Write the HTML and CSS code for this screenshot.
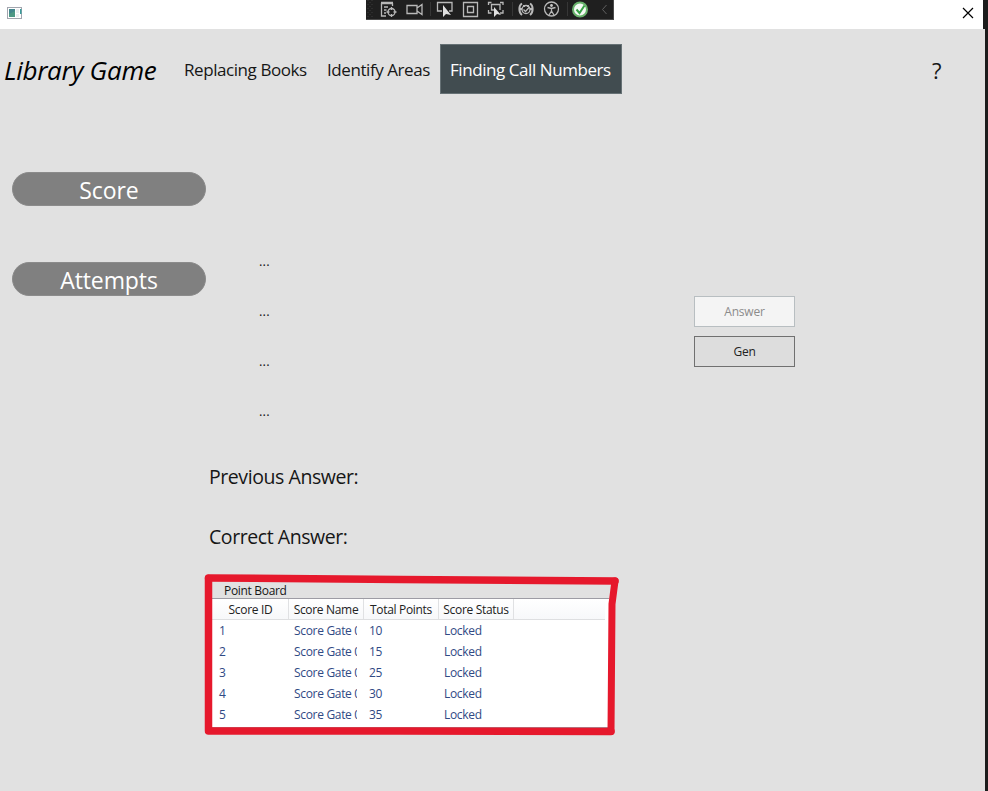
FILE: index.html
```html
<!DOCTYPE html>
<html lang="en">
<head>
<meta charset="utf-8">
<title>Library Game</title>
<link rel="stylesheet" href="styles.css">
</head>
<body>
<div class="titlebar">
  <svg class="app-icon" width="16" height="13" viewBox="0 0 16 13"><rect x=".5" y=".5" width="14" height="11" fill="#fff" stroke="#a2a5ae"/><rect x="2" y="2" width="6" height="8" fill="#43868c"/><path d="M2 7l6-3v6H2z" fill="#53a080" opacity=".7"/><path d="M9 2h3v4H9zM9 7h3v3H9z" fill="#eceef0"/><path d="M13 2h1.500v5H13z" fill="#3b9c9a"/></svg>
  <svg class="close" width="12" height="12" viewBox="0 0 12 12"><path d="M1 1l10 10M11 1L1 11" stroke="#000" stroke-width="1.200" fill="none"/></svg>
</div>
<svg class="debugbar" width="248" height="20" viewBox="0 0 248 20" fill="none">
  <path d="M0 0h248v20H0z" fill="#1f1f1f"/><path d="M0 19.500h248M247.500 0v19" stroke="#4a4a4a"/>
  <path d="M2 0v18M4 2v16M6 0v18" stroke="#3c3c3c" stroke-dasharray="1 3"/>
  <path d="M64.500 2v14M146.500 2v14M201.500 2v14" stroke="#363636"/>
  <g stroke="#b9b9b9" stroke-width="1.300">
    <path d="M15 3h12" stroke-width="2.500"/><path d="M15.500 3v13H20M18 7h4M18 10h2.500M18 13h2M26.500 3v3"/><circle cx="25.500" cy="12" r="3.500"/><path d="M25.500 7v3M25.500 14v3M20.500 12h3M27.500 12h3"/>
    <path d="M41 5.500h10v8H41zM51 8l5-3.500v10L51 11"/>
    <path d="M76 11h-4.500V2.500H86V11h-3"/>
    <path d="M97.500 2.500h14v14h-14zM101.500 6.500h6v6h-6z"/>
    <path d="M122.500 5V2.500h3M134 2.500h3V5M122.500 10v3h3M137 10v3h-3M129 10h-3.500V4.500H134V10"/>
    <path d="M156 3.500c-3.500 2-3.500 9 0 11.500M164 3.500c3.500 2 3.500 9 0 11.500M158 5v2M162 5v2M153 9h3M164 9h3" stroke-width="2"/><circle cx="160" cy="9.500" r="4"/><path d="M157.500 9.500l2 2 4-4.500"/>
    <circle cx="185.500" cy="9" r="7"/><path d="M181.500 7.500l4 1 4-1M185.500 8v3l-2.500 4M185.500 11l2.500 4"/>
  </g>
  <path d="M77 5v12l3-3 5 1zM128 7v10l3-3 4 1z" fill="#e0e0e0"/><circle cx="185.500" cy="5.500" r="1.400" fill="#c9c9c9"/>
  <circle cx="214" cy="9.500" r="7" fill="#f4faf4" stroke="#68b16b" stroke-width="2"/><path d="M210.500 9.500l3 3.500 5-7.500" stroke="#36a145" stroke-width="2"/>
  <path d="M240.500 5l-4 4.500 4 4.500" stroke="#606060"/>
</svg>
<div class="window">
  <header>
    <h1><span>Library Game</span></h1>
    <nav>
      <a class="books">Replacing Books</a>
      <a class="areas">Identify Areas</a>
      <a class="active">Finding Call Numbers</a>
    </nav>
    <span class="help">?</span>
  </header>
  <main>
    <aside>
      <div class="pill"><span class="score">Score</span></div>
      <div class="pill"><span>Attempts</span></div>
    </aside>
    <section class="quiz">
      <div class="choices"><p>...</p><p>...</p><p>...</p><p>...</p></div>
      <p class="result previous">Previous Answer:</p>
      <p class="result correct">Correct Answer:</p>
      <div class="board">
        <div class="board-title">Point Board</div>
        <div class="list">
          <div class="row head"><span>Score ID</span><span>Score Name</span><span>Total Points</span><span>Score Status</span></div>
          <div class="row"><span>1</span><span>Score Gate 0</span><span>10</span><span>Locked</span></div>
          <div class="row"><span>2</span><span>Score Gate 0</span><span>15</span><span>Locked</span></div>
          <div class="row"><span>3</span><span>Score Gate 0</span><span>25</span><span>Locked</span></div>
          <div class="row"><span>4</span><span>Score Gate 0</span><span>30</span><span>Locked</span></div>
          <div class="row"><span>5</span><span>Score Gate 0</span><span>35</span><span>Locked</span></div>
        </div>
        <svg class="marker" width="416" height="164" viewBox="204 573 416 164" fill="none" stroke="#e6182c" stroke-linecap="round" stroke-linejoin="round"><path d="M208.500 578L400 579.500L615 581" stroke-width="7.500"/><path d="M208.500 578.500V731H400L611 731.500" stroke-width="7.500"/><path d="M615 581L612 604L611 731.500" stroke-width="7"/></svg>
      </div>
    </section>
    <div class="actions"><button disabled>Answer</button><button>Gen</button></div>
  </main>
</div>
</body>
</html>
```

FILE: styles.css
```css
* { box-sizing: border-box; }
body { margin: 0; width: 988px; height: 791px; overflow: hidden; background: #1c1c1c; font-family: "Open Sans", "Noto Sans", sans-serif; color: #161616; }
h1, p { margin: 0; font-weight: 400; }
.titlebar { width: 983px; height: 29px; background: #fff; display: flex; justify-content: space-between; padding: 7px 9px 0 7px; }
.debugbar { position: absolute; left: 366px; top: 0; }
.window { width: 985px; height: 762px; background: #e1e1e1; }
header { display: flex; padding-top: 15px; height: 65px; line-height: 52px; white-space: nowrap; }
h1 { width: 174px; padding-left: 4px; font-size: 26px; font-style: italic; letter-spacing: -0.3px; color: #000; line-height: 52px; }
nav { display: flex; width: 758px; font-size: 17px; letter-spacing: -0.43px; }
nav a { height: 50px; padding-left: 10px; line-height: 52px; }
.books { width: 143px; }
.areas { width: 123px; }
nav .active { width: 182px; background: #414c50; border: 1px solid #667175; color: #fff; padding-left: 9px; line-height: 50px; }
.help { font-size: 22px; line-height: 53px; }
main { display: flex; }
aside { width: 205px; padding: 78px 0 0 12px; flex: none; }
.pill { width: 194px; height: 34px; margin-bottom: 56px; border-radius: 17px; background: #808080; border: 1px solid #8b8b8b; color: #fff; text-align: center; font-size: 23px; letter-spacing: -0.1px; line-height: 34px; }
.quiz { width: 489px; padding-top: 142px; }
.choices p { height: 50px; padding-left: 54px; font-size: 13px; letter-spacing: 0.2px; line-height: 50px; }
.result { height: 60px; padding-left: 4px; font-size: 19.500px; line-height: 60px; letter-spacing: -0.43px; }
.previous { margin-top: 11px; }
.correct { margin-bottom: 7px; }
.board { position: relative; width: 414px; height: 162px; padding: 8px 10px 8px 7px; font-size: 12px; letter-spacing: -0.32px; }
.board-title { height: 16px; line-height: 17px; padding-left: 12px; }
.list { height: 130px; background: #fff; border-top: 1px solid #9d9ca4; border-bottom: 1px solid #9d9ca4; }
.row { display: grid; grid-template-columns: 76px 75px 75px 75px; height: 21px; line-height: 21px; color: #304984; }
.row span { white-space: nowrap; overflow: hidden; padding-left: 6px; }
.row span:first-child { padding-left: 7px; }
.row span:nth-child(2) { width: 69px; }
.row.head { height: 21px; line-height: 22px; margin-right: 4px; padding-left: 1px; border-bottom: 1px solid #dedfe1; background: linear-gradient(#fff, #f7f8fa); color: #222; }
.row.head span { width: auto; padding: 0; text-align: center; border-right: 1px solid #e0e1e3; }
.marker { position: absolute; left: -1px; top: -1px; }
.actions { padding-top: 202px; display: flex; flex-direction: column; gap: 9px; }
button { width: 101px; height: 31px; padding: 0; border: 1px solid #707070; background: #ddd; color: #222; font: 12px/29px "Open Sans", sans-serif; letter-spacing: -0.2px; }
button:disabled { background: #f4f4f4; border-color: #b8bec1; color: #8b8b8b; }
```
